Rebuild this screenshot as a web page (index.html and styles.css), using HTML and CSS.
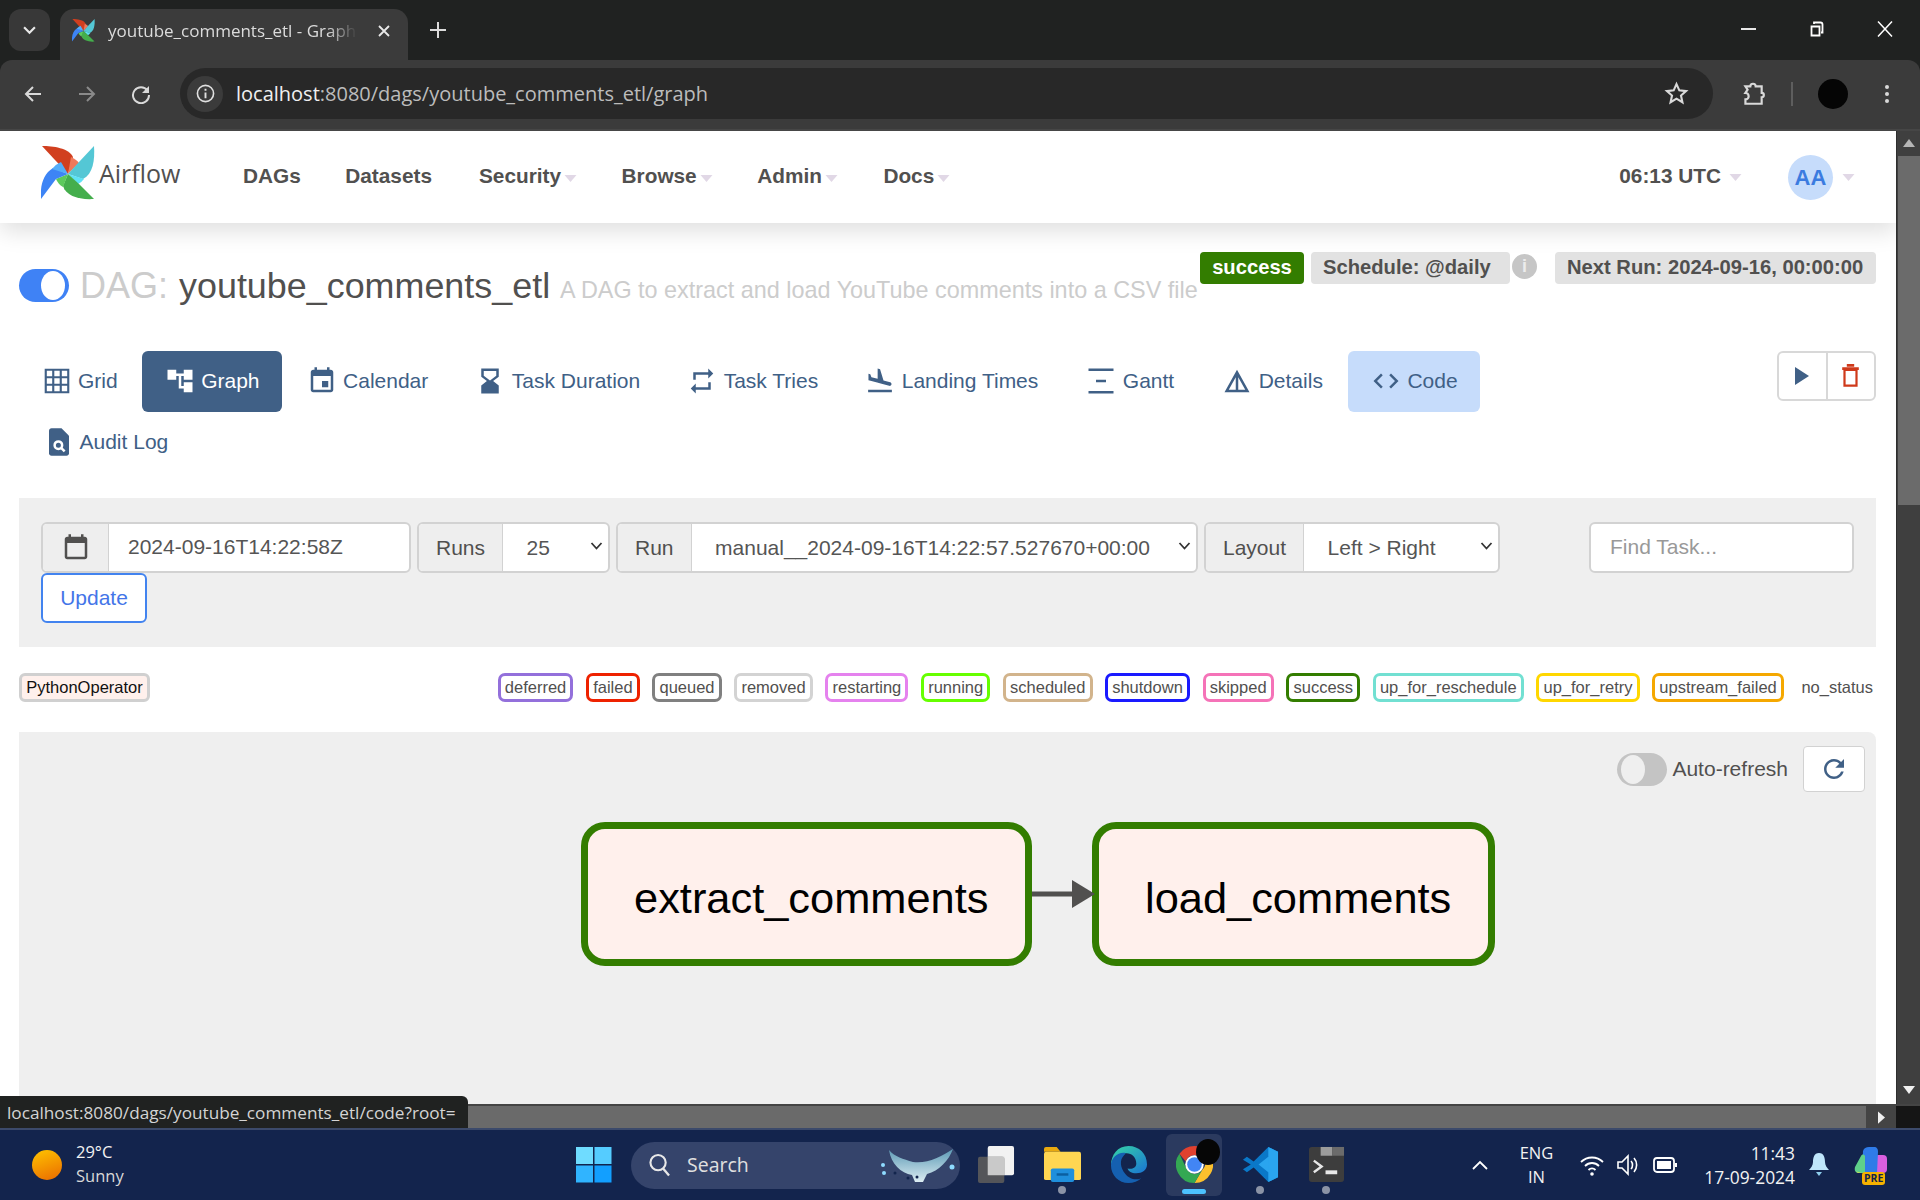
FILE: index.html
```html
<!DOCTYPE html>
<html lang="en">
<head>
<meta charset="utf-8">
<title>youtube_comments_etl - Graph - Airflow</title>
<link rel="stylesheet" href="styles.css">
</head>
<body>
<svg class="defs" width="0" height="0" aria-hidden="true">
  <symbol id="pinwheel" viewBox="0 0 54 54">
    <path fill="#d13f1f" d="M1 0C12 0 28 2 32 11L27 28Z"/>
    <path fill="#f0795b" d="M30 11Q36 14 38 17L27 28Z"/>
    <path fill="#54c7d5" d="M53 0C54 14 52 28 42 33L27 28L38 16Z"/>
    <path fill="#5fe2f5" d="M27 28L43 33Q40 37 37 38Z"/>
    <path fill="#44ae4c" d="M53 53C38 54 25 50 22 40L27 28L38 38Z"/>
    <path fill="#5cca5c" d="M27 28L22 41Q17 38 15 33Z"/>
    <path fill="#3d84f5" d="M0 53C-1 40 2 28 12 22L27 28L15 33Z"/>
    <path fill="#54adf8" d="M27 28L11 23Q15 18 20 16Z"/>
  </symbol>
  <symbol id="caret" viewBox="0 0 12 7"><path fill="#e1d8e6" d="M0 0h12L6 7z"/></symbol>
  <symbol id="chev" viewBox="0 0 12 8"><path fill="none" stroke="#333" stroke-width="1.8" d="M1 1l5 5.500L11 1"/></symbol>
</svg>

<header class="tabstrip">
  <div class="tab-search"><svg class="ico12" viewBox="0 0 12 8"><path fill="none" stroke="#e8e8e8" stroke-width="2" d="M1 1l5 5 5-5"/></svg></div>
  <div class="tab">
    <svg class="favicon"><use href="#pinwheel"/></svg>
    <span class="tab-title">youtube_comments_etl - Graph</span>
    <svg class="tab-close" viewBox="0 0 12 12"><path stroke="#e8e8e8" stroke-width="1.8" d="M1 1l10 10M11 1L1 11"/></svg>
  </div>
  <svg class="new-tab" viewBox="0 0 16 16"><path stroke="#dcdcdc" stroke-width="2" d="M8 0v16M0 8h16"/></svg>
  <div class="win-controls">
    <svg class="win-ico" viewBox="0 0 16 16"><path stroke="#fff" stroke-width="1.800" d="M0 8h15"/></svg>
    <svg class="win-ico" viewBox="0 0 16 16"><path fill="none" stroke="#fff" stroke-width="1.800" d="M2.500 5.500h8v9h-8zM5 3V1.500h6.500a2 2 0 0 1 2 2v8h-1.500"/></svg>
    <svg class="win-ico" viewBox="0 0 16 16"><path stroke="#fff" stroke-width="1.500" d="M1 0.500l14 15M15 0.500l-14 15"/></svg>
  </div>
</header>

<div class="toolbar">
  <svg class="tb-ico" viewBox="0 0 20 20"><path fill="none" stroke="#d9d9d9" stroke-width="2" d="M18 10H3M10 3l-7 7 7 7"/></svg>
  <svg class="tb-ico dim" viewBox="0 0 20 20"><path fill="none" stroke="#8a8a8a" stroke-width="2" d="M2 10h15M10 3l7 7-7 7"/></svg>
  <svg class="tb-ico" viewBox="0 0 20 20"><path fill="none" stroke="#d9d9d9" stroke-width="2" d="M16.500 6.500A8 8 0 1 0 18 11"/><path fill="#d9d9d9" d="M18 2v7h-7z"/></svg>
  <div class="omnibox">
    <div class="site-info"><svg class="info-ico" viewBox="0 0 20 20"><circle cx="10" cy="10" r="8.500" fill="none" stroke="#e0e0e0" stroke-width="1.700"/><path stroke="#e0e0e0" stroke-width="2" d="M10 9v6M10 5v2"/></svg></div>
    <span class="url"><span class="url-host">localhost</span>:8080/dags/youtube_comments_etl/graph</span>
    <svg class="star" viewBox="0 0 24 24"><path fill="none" stroke="#d9d9d9" stroke-width="2" d="M12 3l2.700 6 6.500.7-4.900 4.300 1.400 6.400L12 17l-5.700 3.400 1.400-6.400-4.900-4.300 6.500-.7z"/></svg>
  </div>
  <svg class="ext" viewBox="0 0 24 24"><path fill="none" stroke="#d9d9d9" stroke-width="2" d="M5 5h4.500a2.500 2.500 0 0 1 5 0H20v6a2 2 0 0 1 0 4v6H5v-4a3 3 0 0 0 0-6l2-3z"/></svg>
  <span class="tb-sep"></span>
  <span class="profile"></span>
  <svg class="kebab" viewBox="0 0 4 20"><circle cx="2" cy="3" r="2" fill="#d9d9d9"/><circle cx="2" cy="10" r="2" fill="#d9d9d9"/><circle cx="2" cy="17" r="2" fill="#d9d9d9"/></svg>
</div>

<div class="viewport">
  <main class="page">
    <nav class="navbar">
      <a class="brand"><svg class="logo"><use href="#pinwheel"/></svg><span class="brand-name">Airflow</span></a>
      <ul class="menu">
        <li>DAGs</li>
        <li>Datasets</li>
        <li>Security<svg class="caret"><use href="#caret"/></svg></li>
        <li>Browse<svg class="caret"><use href="#caret"/></svg></li>
        <li>Admin<svg class="caret"><use href="#caret"/></svg></li>
        <li>Docs<svg class="caret"><use href="#caret"/></svg></li>
      </ul>
      <div class="nav-right">
        <span class="clock">06:13 UTC</span><svg class="caret caret-clock"><use href="#caret"/></svg>
        <span class="avatar">AA</span><svg class="caret caret-user"><use href="#caret"/></svg>
      </div>
    </nav>

    <div class="content">
      <section class="dag-head">
        <h3 class="dag-title">
          <span class="toggle on"><span class="knob"></span></span>
          <span class="dag-label">DAG:</span>
          <span class="dag-name">youtube_comments_etl</span>
          <small class="dag-desc">A DAG to extract and load YouTube comments into a CSV file</small>
        </h3>
        <div class="badges">
          <span class="badge badge-success">success</span>
          <span class="badge badge-sched">Schedule: @daily</span>
          <span class="info-dot">i</span>
          <span class="badge badge-next">Next Run: 2024-09-16, 00:00:00</span>
        </div>
      </section>

      <section class="tabs-row">
        <ul class="tabs">
          <li class="tab-link"><svg class="t-ico" viewBox="0 0 24 24"><path fill="none" stroke="currentColor" stroke-width="1.700" d="M3 3h18v18H3zM3 9h18M3 15h18M9 3v18M15 3v18"/></svg>Grid</li>
          <li class="tab-link active"><svg class="t-ico" viewBox="0 0 24 24"><path fill="currentColor" d="M22 11V3h-7v3H9V3H2v8h7V8h2v10h4v3h7v-8h-7v3h-2V8h2v3z"/></svg>Graph</li>
          <li class="tab-link"><svg class="t-ico" viewBox="0 0 24 24"><path fill="currentColor" d="M17 12h-5v5h5v-5zM16 1v2H8V1H6v2H5c-1.110 0-1.990.9-1.990 2L3 19c0 1.100.89 2 2 2h14c1.100 0 2-.9 2-2V5c0-1.100-.9-2-2-2h-1V1h-2zm3 18H5V8h14v11z"/></svg>Calendar</li>
          <li class="tab-link"><svg class="t-ico" viewBox="0 0 24 24"><path fill="currentColor" fill-rule="evenodd" d="M5 2h14v6.500L14.500 12l4.500 3.500V22H5v-6.500L9.500 12 5 8.500zM7 4v3.700l5 3.800 5-3.800V4z"/></svg>Task Duration</li>
          <li class="tab-link"><svg class="t-ico" viewBox="0 0 24 24"><path fill="currentColor" d="M7 7h10v3l4-4-4-4v3H5v6h2V7zm10 10H7v-3l-4 4 4 4v-3h12v-6h-2v4z"/></svg>Task Tries</li>
          <li class="tab-link"><svg class="t-ico" viewBox="0 0 24 24"><path fill="currentColor" d="M2.500 19h19v2h-19zm7.180-5.730l4.350 1.160 5.310 1.420c.8.21 1.620-.26 1.840-1.060.21-.8-.26-1.620-1.060-1.840l-5.310-1.420-2.760-9.020L10.120 2v8.280L5.150 8.950l-.93-2.320-1.450-.39v5.170l1.600.43 5.310 1.430z"/></svg>Landing Times</li>
          <li class="tab-link tab-nudge"><svg class="t-ico" viewBox="0 0 24 24"><path fill="currentColor" d="M2 2h20v2H2zM8 11h8v2H8zM2 20h20v2H2z"/></svg>Gantt</li>
          <li class="tab-link tab-nudge"><svg class="t-ico" viewBox="0 0 24 24"><path fill="currentColor" d="M12 3L2 21h20L12 3zm1 5.920L18.600 19H13V8.920zm-2 0V19H5.400L11 8.920z"/></svg>Details</li>
          <li class="tab-link tab-nudge hover"><svg class="t-ico" viewBox="0 0 24 24"><path fill="currentColor" d="M9.400 16.600L4.800 12l4.600-4.600L8 6l-6 6 6 6 1.400-1.400zm5.200 0l4.600-4.600-4.600-4.600L16 6l6 6-6 6-1.400-1.400z"/></svg>Code</li>
          <li class="tab-link audit"><svg class="t-ico" viewBox="0 0 24 24"><path fill="currentColor" d="M14 1H6c-1.100 0-2 .9-2 2v18c0 1.100.9 2 2 2h12c1.100 0 2-.9 2-2V7z"/><circle cx="11.500" cy="14.500" r="3" fill="none" stroke="#fff" stroke-width="2"/><path stroke="#fff" stroke-width="2" d="M13.500 16.500l3 3"/></svg>Audit Log</li>
        </ul>
        <div class="actions">
          <span class="action"><svg class="play" viewBox="0 0 14 18"><path fill="#406086" d="M0 0l14 9-14 9z"/></svg></span>
          <span class="action"><svg class="trash" viewBox="0 0 18 26"><path fill="none" stroke="#cf3a1b" stroke-width="2.400" d="M2.500 6.500h13v17h-13z"/><path fill="#cf3a1b" d="M0 3.500h18v3H0zM5 0h8v3H5z"/></svg></span>
        </div>
      </section>

      <form class="filters">
        <div class="group group-date">
          <span class="addon addon-cal"><svg class="cal-ico" viewBox="0 0 24 24"><path fill="#51504f" d="M6 1h2v2h8V1h2v2h1c1.100 0 2 .9 2 2v14c0 1.100-.9 2-2 2H5c-1.100 0-2-.9-2-2V5c0-1.100.9-2 2-2h1zM5 8v11h14V8z"/></svg></span>
          <span class="field">2024-09-16T14:22:58Z</span>
        </div>
        <div class="group group-runs">
          <span class="addon">Runs</span>
          <span class="field select">25<svg class="chev"><use href="#chev"/></svg></span>
        </div>
        <div class="group group-run">
          <span class="addon">Run</span>
          <span class="field select">manual__2024-09-16T14:22:57.527670+00:00<svg class="chev"><use href="#chev"/></svg></span>
        </div>
        <div class="group group-layout">
          <span class="addon">Layout</span>
          <span class="field select">Left &gt; Right<svg class="chev"><use href="#chev"/></svg></span>
        </div>
        <div class="group group-find"><span class="field placeholder">Find Task...</span></div>
        <button class="update" type="button">Update</button>
      </form>

      <section class="legend">
        <span class="op-chip">PythonOperator</span>
        <div class="states">
          <span class="state s-deferred">deferred</span>
          <span class="state s-failed">failed</span>
          <span class="state s-queued">queued</span>
          <span class="state s-removed">removed</span>
          <span class="state s-restarting">restarting</span>
          <span class="state s-running">running</span>
          <span class="state s-scheduled">scheduled</span>
          <span class="state s-shutdown">shutdown</span>
          <span class="state s-skipped">skipped</span>
          <span class="state s-success">success</span>
          <span class="state s-reschedule">up_for_reschedule</span>
          <span class="state s-retry">up_for_retry</span>
          <span class="state s-upstream">upstream_failed</span>
          <span class="state s-none">no_status</span>
        </div>
      </section>

      <section class="graph">
        <div class="graph-tools">
          <span class="toggle off"><span class="knob"></span></span>
          <span class="auto-label">Auto-refresh</span>
          <span class="refresh"><svg class="refresh-ico" viewBox="0 0 24 24"><path fill="#406086" d="M17.650 6.350C16.200 4.900 14.210 4 12 4c-4.420 0-7.990 3.580-7.990 8s3.570 8 7.990 8c3.730 0 6.840-2.550 7.730-6h-2.080c-.82 2.330-3.040 4-5.650 4-3.310 0-6-2.690-6-6s2.690-6 6-6c1.660 0 3.140.69 4.220 1.780L13 11h7V4l-2.350 2.350z"/></svg></span>
        </div>
        <div class="dag-canvas">
          <div class="node node-extract">extract_comments</div>
          <svg class="edge" viewBox="0 0 63 28"><path stroke="#51504f" stroke-width="5" d="M0 14h42"/><path fill="#51504f" d="M40 0l23 14-23 14z"/></svg>
          <div class="node node-load">load_comments</div>
        </div>
      </section>
    </div>
  </main>
  <aside class="vscroll">
    <svg class="vs-arrow" viewBox="0 0 12 8"><path fill="#b5b5b5" d="M6 0l6 8H0z"/></svg>
    <span class="vs-thumb"></span>
    <svg class="vs-arrow vs-down" viewBox="0 0 12 8"><path fill="#f0f0f0" d="M6 8l6-8H0z"/></svg>
  </aside>
</div>

<div class="hscroll">
  <span class="hs-track"></span>
  <span class="hs-right"><svg class="hs-arrow" viewBox="0 0 8 14"><path fill="#f0f0f0" d="M8 7L0 14V0z"/></svg></span>
  <span class="hs-corner"></span>
</div>
<div class="status">localhost:8080/dags/youtube_comments_etl/code?root=</div>

<footer class="taskbar">
  <div class="weather">
    <span class="sun"></span>
    <div class="weather-text"><span>29°C</span><span class="sunny">Sunny</span></div>
  </div>
  <div class="centre">
    <svg class="win-logo" viewBox="0 0 36 36">
      <rect x="0" y="0" width="17" height="17" fill="#6fdcff"/><rect x="18.500" y="0" width="17" height="17" fill="#55ccff"/>
      <rect x="0" y="18.500" width="17" height="17" fill="#30b4ff"/><rect x="18.500" y="18.500" width="17" height="17" fill="#129fff"/>
    </svg>
    <div class="search">
      <svg class="search-ico" viewBox="0 0 22 24"><circle cx="9.500" cy="9.500" r="8" fill="none" stroke="#e8e8e8" stroke-width="2.200"/><path stroke="#e8e8e8" stroke-width="2.400" d="M15 16l6 7"/></svg>
      <span class="search-text">Search</span>
      <svg class="manta" viewBox="0 0 74 36">
        <defs><linearGradient id="mantag" x1="0" y1="0" x2="0" y2="1"><stop offset="0" stop-color="#5c9ab5"/><stop offset="1" stop-color="#dcecf2"/></linearGradient></defs>
        <path fill="url(#mantag)" d="M8 3c6 7 14 9 24 12 14 2 28-5 40-13-4 11-14 22-26 25l-4 8h-8l-3-7C20 26 10 17 8 3z"/>
        <circle cx="2" cy="18" r="2" fill="#8fdcff"/><circle cx="3" cy="26" r="2" fill="#8fdcff"/><circle cx="71" cy="20" r="2.500" fill="#8fdcff"/>
        <circle cx="14" cy="26" r="1.500" fill="#12254d"/><circle cx="27" cy="31" r="1.500" fill="#12254d"/><circle cx="36" cy="30" r="1.500" fill="#12254d"/>
      </svg>
    </div>
    <div class="apps">
      <span class="app">
        <svg class="app-ico" viewBox="0 0 38 38"><rect x="10" y="0" width="27" height="30" rx="2" fill="#f2f2f2"/><rect x="0" y="11" width="27" height="27" rx="2" fill="#5a5a5a" fill-opacity=".92"/><rect x="10" y="11" width="17" height="19" fill="#c9c9c9"/></svg>
      </span>
      <span class="app dotted">
        <svg class="app-ico" viewBox="0 0 38 36"><path fill="#e9a90f" d="M0 2a2 2 0 0 1 2-2h11l4 5h-17z"/><rect y="5" width="38" height="29" rx="2" fill="#ffd652"/><rect x="7" y="22" width="24" height="14" rx="2" fill="#1f8fdc"/><rect x="13" y="27" width="12" height="2.500" fill="#0b5fa0"/></svg>
      </span>
      <span class="app">
        <svg class="app-ico" viewBox="0 0 38 38"><defs><linearGradient id="edgeg" x1="0" y1="0" x2="1" y2="1"><stop offset="0" stop-color="#36d6a5"/><stop offset="1" stop-color="#1a74d4"/></linearGradient></defs><path fill="url(#edgeg)" d="M19 0C30 0 38 8 38 19c0 6-5 9-11 9-5 0-8-2-9-5 4 1 9 0 9-5C27 10 20 6 14 8 7 10 3 15 1 20 1 9 8 0 19 0z"/><path fill="#1560b0" d="M1 20c0-7 6-13 13-13 3 0 2 1 0 3-4 4-4 12 2 19 3 4 10 7 16 4-3 3-8 5-13 5C9 38 1 30 1 20z"/></svg>
      </span>
      <span class="app active">
        <svg class="app-ico" viewBox="0 0 38 38"><path fill="#e1412f" d="M19 0a19 19 0 0 1 16.500 9.500H19a9.500 9.500 0 0 0-9 6.500L3.500 8A19 19 0 0 1 19 0z"/><path fill="#fbc02d" d="M35.500 9.500A19 19 0 0 1 19 38l8-13.500a9.500 9.500 0 0 0-1-15z"/><path fill="#34a853" d="M3.500 8L11 24a9.500 9.500 0 0 0 16 .5L19 38A19 19 0 0 1 3.500 8z"/><circle cx="19" cy="19" r="9.500" fill="#fff"/><circle cx="19" cy="19" r="7.500" fill="#4285f4"/></svg>
        <span class="blot"></span>
        <span class="app-bar"></span>
      </span>
      <span class="app dotted">
        <svg class="app-ico" viewBox="0 0 38 38"><path fill="#0a78c8" d="M27 1l10 5v26l-10 5L12 22l-7 5-4-3 8-5-8-5 4-3 7 5z"/><path fill="#2aa5ef" d="M27 1l10 5v26l-10 5zM27 11L17 19l10 8z"/></svg>
      </span>
      <span class="app dotted">
        <svg class="app-ico" viewBox="0 0 36 38"><rect width="36" height="36" y="1" rx="3" fill="#3d3d3d"/><rect width="12" height="9" x="12" y="1" fill="#9c9c9c"/><rect width="12" height="9" x="24" y="1" fill="#6b6b6b"/><path fill="none" stroke="#e8e8e8" stroke-width="2.500" d="M5 15l8 6-8 6"/><rect x="17" y="25" width="12" height="4" fill="#e8e8e8"/></svg>
      </span>
    </div>
  </div>
  <div class="tray">
    <svg class="tray-chev" viewBox="0 0 16 10"><path fill="none" stroke="#fff" stroke-width="1.800" d="M1 9l7-7 7 7"/></svg>
    <div class="lang"><span>ENG</span><span>IN</span></div>
    <svg class="tray-ico" viewBox="0 0 24 24"><path fill="none" stroke="#fff" stroke-width="1.800" d="M1 9c6-6 16-6 22 0M5 13c4-4 10-4 14 0M8.500 17c2-2 5-2 7 0"/><circle cx="12" cy="21" r="1.800" fill="#fff"/></svg>
    <svg class="tray-ico" viewBox="0 0 24 24"><path fill="none" stroke="#fff" stroke-width="1.600" d="M3 9h4l6-6v18l-6-6H3zM16 8c2 2 2 6 0 8M19 5c3.500 4 3.500 10 0 14"/></svg>
    <svg class="tray-ico tray-batt" viewBox="0 0 24 24"><rect x="1" y="5" width="20" height="14" rx="3" fill="none" stroke="#fff" stroke-width="1.800"/><rect x="4" y="8" width="14" height="8" fill="#fff"/><rect x="22" y="10" width="2" height="4" fill="#fff"/></svg>
    <div class="datetime"><span>11:43</span><span>17-09-2024</span></div>
    <svg class="bell" viewBox="0 0 20 24"><path fill="#bfe6fb" d="M10 0c5 0 6 5 6 9 0 3 2 6 4 8H0c2-2 4-5 4-8 0-4 1-9 6-9z"/><path fill="#8fcfee" d="M7 19h6l-3 4z"/></svg>
    <div class="copilot">
      <svg class="copilot-ico" viewBox="0 0 34 30"><rect x="20" y="8" width="13" height="18" rx="4" fill="#d95fe0"/><path fill="#2f7be8" d="M9 4c1-3 3-4 6-4h5c3 0 4 2 4 5l-1 21H8z"/><path fill="#5fd08a" d="M7 9c1-2 3-2 4 0v17H5c-3 0-5-2-4-6z"/><path fill="#e8df4a" d="M2 24c3 2 6 2 10 2H4z"/></svg>
      <span class="pre">PRE</span>
    </div>
  </div>
</footer>
</body>
</html>
```
FILE: styles.css
```css
* { box-sizing: border-box; }
html, body { margin: 0; padding: 0; }
body {
  width: 1920px;
  height: 1200px;
  overflow: hidden;
  display: flex;
  flex-direction: column;
  position: relative;
  font-family: "Liberation Sans", Arial, sans-serif;
  color: #51504f;
  background: #202221;
}
ul { list-style: none; margin: 0; padding: 0; }
.defs { position: absolute; }

/* browser chrome */
.tabstrip {
  height: 60px;
  flex: none;
  display: flex;
  align-items: flex-start;
  padding: 9px 0 0 9px;
  background: #202221;
  font-family: "Open Sans", sans-serif;
}
.tab-search {
  width: 41px;
  height: 42px;
  border-radius: 12px;
  background: #383838;
  display: flex;
  align-items: center;
  justify-content: center;
}
.ico12 { width: 13px; height: 9px; }
.tab {
  width: 348px;
  height: 51px;
  margin-left: 10px;
  border-radius: 14px 14px 0 0;
  background: #3b3b3b;
  display: flex;
  align-items: center;
  padding: 0 17px 8px 12px;
}
.favicon { width: 23px; height: 23px; flex: none; }
.tab-title {
  margin-left: 13px;
  width: 249px;
  overflow: hidden;
  white-space: nowrap;
  font-size: 17px;
  color: #dcdcdc;
  -webkit-mask-image: linear-gradient(to right, #000 88%, transparent);
  mask-image: linear-gradient(to right, #000 88%, transparent);
}
.tab-close { width: 12px; height: 12px; margin-left: 21px; flex: none; }
.new-tab { width: 16px; height: 16px; margin: 13px 0 0 22px; flex: none; }
.win-controls {
  margin-left: auto;
  display: flex;
  gap: 52px;
  padding: 12px 27px 0 0;
}
.win-ico { width: 16px; height: 16px; }

.toolbar {
  height: 71px;
  flex: none;
  display: flex;
  align-items: center;
  background: #3b3b3b;
  border-radius: 12px 12px 0 0;
  border-bottom: 2px solid #464646;
  padding: 0 0 2px 23px;
}
.tb-ico { width: 20px; height: 20px; margin-right: 34px; flex: none; }
.omnibox {
  width: 1533px;
  height: 51px;
  margin-left: -5px;
  border-radius: 26px;
  background: #282828;
  display: flex;
  align-items: center;
  padding: 0 24px 0 7px;
  font-family: "Open Sans", sans-serif;
}
.site-info {
  width: 36px;
  height: 36px;
  border-radius: 50%;
  background: #3b3b3b;
  display: flex;
  align-items: center;
  justify-content: center;
}
.info-ico { width: 19px; height: 19px; }
.url { margin-left: 13px; font-size: 20px; color: #bcbcbc; white-space: nowrap; }
.url-host { color: #f0f0f0; }
.star { width: 25px; height: 25px; margin-left: auto; }
.ext { width: 26px; height: 26px; margin-left: 27px; flex: none; }
.tb-sep { width: 2px; height: 24px; margin-left: 25px; background: #5e5e5e; flex: none; }
.profile { width: 30px; height: 30px; border-radius: 50%; background: #050505; margin-left: 25px; flex: none; }
.kebab { width: 4px; height: 20px; margin-left: 37px; flex: none; }

.viewport { height: 973px; flex: none; display: flex; overflow: hidden; }
.page { width: 1896px; flex: none; background: #fff; overflow: hidden; }

.vscroll {
  width: 24px;
  flex: none;
  background: #3f3f3f;
  display: flex;
  flex-direction: column;
  align-items: center;
  border-left: 1px solid #2e2e2e;
}
.vs-arrow { width: 12px; height: 8px; margin-top: 8px; flex: none; }
.vs-thumb { width: 22px; height: 349px; margin-top: 9px; background: #6b6b6b; flex: none; }
.vs-down { margin-top: auto; margin-bottom: 10px; }

.hscroll { height: 24px; flex: none; display: flex; background: #6a6a6a; border-top: 2px solid #444; }
.hs-track { flex: 1; }
.hs-right { width: 30px; background: #444; display: flex; align-items: center; justify-content: center; }
.hs-arrow { width: 7px; height: 13px; }
.hs-corner { width: 24px; background: #151515; }
.status {
  position: absolute;
  left: 0;
  bottom: 72px;
  width: 468px;
  height: 32px;
  padding: 5px 0 0 7px;
  background: #202221;
  border-radius: 0 6px 0 0;
  color: #d4d4d4;
  font-family: "Open Sans", sans-serif;
  font-size: 17.200px;
  white-space: nowrap;
}

/* airflow nav */
.navbar {
  height: 92px;
  display: flex;
  align-items: flex-start;
  background: #fff;
  box-shadow: 0 8px 22px rgba(0, 0, 0, .13);
  position: relative;
}
.brand { display: flex; padding: 15px 0 0 41px; width: 243px; flex: none; }
.logo { width: 54px; height: 54px; flex: none; }
.brand-name {
  margin: 11px 0 0 4px;
  font-family: "Open Sans", sans-serif;
  font-size: 25px;
  line-height: 32px;
  color: #51504f;
}
.menu { display: flex; padding-top: 32px; font-weight: 700; font-size: 20.800px; line-height: 26px; }
.menu li { margin-right: 44.500px; display: flex; align-items: center; }
.menu li:nth-child(2) { margin-right: 47px; }
.menu li:nth-child(5) { margin-right: 45.500px; }
.caret { width: 13px; height: 7px; flex: none; margin: 4px 0 0 3px; }
.nav-right { margin-left: auto; display: flex; align-items: flex-start; padding: 32px 41px 0 0; font-weight: 700; font-size: 20.800px; line-height: 26px; }
.clock { white-space: nowrap; }
.caret-clock { margin: 11px 0 0 8px; }
.avatar {
  width: 45px;
  height: 45px;
  margin: -8px 0 0 46px;
  border-radius: 50%;
  background: #c6dcfb;
  color: #3b7be0;
  display: flex;
  align-items: center;
  justify-content: center;
  font-size: 22px;
}
.caret-user { margin: 11px 0 0 9px; }

.content { padding: 29px 20px 0 19px; }

.dag-head { height: 99px; display: flex; justify-content: space-between; align-items: flex-start; }
.dag-title { margin: 14px 0 0; display: flex; align-items: center; font-weight: 400; white-space: nowrap; height: 40px; }
.toggle { display: block; border-radius: 17px; flex: none; width: 50px; height: 33px; position: relative; }
.toggle.on { background: #3f82f5; top: -1px; }
.toggle.off { background: #c4c4c4; }
.knob { position: absolute; top: 2px; width: 24px; height: 29px; border-radius: 50%; background: #fff; }
.on .knob { right: 4px; }
.off .knob { left: 4px; background: #efefef; }
.dag-label { margin-left: 11px; font-size: 36px; color: #ccc; }
.dag-name { margin-left: 11px; font-size: 35.900px; color: #51504f; }
.dag-desc { margin-left: 10px; font-size: 23.400px; color: #ccc; position: relative; top: 4px; }
.badges { display: flex; align-items: flex-start; }
.badge { height: 32px; line-height: 31px; border-radius: 4px; font-weight: 700; font-size: 20.200px; white-space: nowrap; }
.badge-success { width: 104px; text-align: center; background: #337d00; color: #fff; }
.badge-sched { width: 199px; margin-left: 7px; padding-left: 12px; background: #e2e2e2; }
.info-dot {
  width: 25px;
  height: 25px;
  margin: 2px 0 0 2px;
  border-radius: 50%;
  background: #c6c6c6;
  color: #ececec;
  text-align: center;
  font-weight: 700;
  font-size: 18px;
  line-height: 25px;
}
.badge-next { width: 321px; margin-left: 18px; padding-left: 12px; background: #e2e2e2; }

.tabs-row { display: flex; justify-content: space-between; align-items: flex-start; height: 147px; }
.tabs { display: flex; flex-wrap: wrap; width: 1472px; column-gap: 2px; font-size: 21px; }
.tab-link {
  height: 61px;
  padding: 0 22.500px 2px;
  display: flex;
  align-items: center;
  border-radius: 6px;
  color: #406086;
  white-space: nowrap;
}
.tab-nudge { margin-left: 1px; }
.tab-link.active { background: #406086; color: #fff; }
.tab-link.hover { background: #c6dcfb; }
.tab-link.audit { height: 60px; padding: 0 22.500px 0 25px; }
.t-ico { width: 30px; height: 30px; margin-right: 6.500px; flex: none; }
.audit .t-ico { margin-right: 5.500px; }
.actions { display: flex; width: 99px; height: 50px; border: 2px solid #d8d8d8; border-radius: 6px; }
.action { flex: 1; display: flex; align-items: center; justify-content: center; }
.action + .action { border-left: 2px solid #d8d8d8; }
.play { width: 14px; height: 18px; }
.trash { width: 17px; height: 24px; }

.filters {
  margin: 0;
  padding: 24px 22px;
  background: #efefef;
  display: flex;
  flex-wrap: wrap;
  column-gap: 6px;
  height: 149px;
  font-size: 21px;
}
.group { height: 51px; display: flex; background: #fff; border: 2px solid #d2d2d2; border-radius: 6px; flex: none; }
.group-date { width: 370px; }
.group-runs { width: 193px; }
.group-run { width: 582px; }
.group-layout { width: 296px; }
.group-find { width: 265px; margin-left: auto; }
.addon {
  display: flex;
  align-items: center;
  padding: 0 17px;
  background: #eee;
  border-right: 1px solid #d2d2d2;
  border-radius: 4px 0 0 4px;
  flex: none;
}
.addon-cal { width: 66px; justify-content: center; padding: 0; }
.cal-ico { width: 30px; height: 30px; }
.field { flex: 1; display: flex; align-items: center; padding: 0 18px 2px 19px; color: #555; white-space: nowrap; position: relative; min-width: 0; }
.select { padding-left: 23.500px; padding-bottom: 0; }
.placeholder { color: #999; }
.chev { position: absolute; right: 5px; top: 18px; width: 13px; height: 8px; }
.update {
  width: 106px;
  height: 50px;
  border: 2px solid #4283ef;
  border-radius: 6px;
  background: #fff;
  color: #4475e8;
  font: inherit;
  padding: 0;
  flex: none;
}

.legend { margin-top: 26px; height: 29px; display: flex; justify-content: space-between; align-items: center; font-size: 16.500px; }
.op-chip { height: 29px; width: 131px; text-align: center; line-height: 23px; background: #fff0ec; border: 3px solid #d0d0d0; border-radius: 6px; color: #111; white-space: nowrap; }
.states { display: flex; gap: 12.500px; }
.state { height: 29px; line-height: 23px; padding: 0 4.200px; border: 3px solid; border-radius: 7px; white-space: nowrap; background: #fff; }
.s-deferred { border-color: #9370db; }
.s-failed { border-color: #ee2200; }
.s-queued { border-color: #808080; }
.s-removed { border-color: #d3d3d3; }
.s-restarting { border-color: #e582ee; }
.s-running { border-color: #66ff00; }
.s-scheduled { border-color: #d2b48c; }
.s-shutdown { border-color: #1a1aff; }
.s-skipped { border-color: #f573b8; }
.s-success { border-color: #337d00; }
.s-reschedule { border-color: #72e0d2; }
.s-retry { border-color: #ffd700; }
.s-upstream { border-color: #f5a800; }
.s-none { border-color: transparent; padding: 0; margin-left: 2px; }

.graph { margin-top: 30px; height: 500px; background: #efefef; border-radius: 0 8px 0 0; padding-top: 14px; }
.graph-tools { display: flex; align-items: center; justify-content: flex-end; padding-right: 11px; font-size: 21px; height: 46px; }
.auto-label { margin-left: 5px; }
.refresh {
  width: 62px;
  height: 46px;
  margin-left: 15px;
  background: #fff;
  border: 1px solid #d2d2d2;
  border-radius: 4px;
  display: flex;
  align-items: center;
  justify-content: center;
}
.refresh-ico { width: 30px; height: 30px; }
.dag-canvas { display: flex; align-items: center; margin: 30px 0 0 562px; }
.node {
  height: 144px;
  border: 7px solid #337d00;
  border-radius: 24px;
  background: #fff0ec;
  color: #000;
  font-size: 43.400px;
  display: flex;
  align-items: center;
  white-space: nowrap;
  padding-top: 8px;
  flex: none;
}
.node-extract { width: 451px; padding-left: 46px; }
.node-load { width: 403px; padding-left: 46px; }
.edge { width: 63px; height: 28px; flex: none; margin-right: -3px; position: relative; z-index: 1; }

/* taskbar */
.taskbar {
  height: 72px;
  flex: none;
  background: #13244d;
  border-top: 2px solid #3c4a6b;
  display: flex;
  position: relative;
  font-family: "Open Sans", sans-serif;
  color: #f2f2f2;
}
.weather { display: flex; align-items: center; padding-left: 32px; width: 576px; flex: none; }
.sun { width: 30px; height: 30px; border-radius: 50%; background: linear-gradient(160deg, #ffc400, #ea6a00); }
.weather-text { display: flex; flex-direction: column; margin: -2px 0 0 14px; font-size: 16.500px; line-height: 24px; }
.sunny { color: #d8d8d8; }
.centre { display: flex; align-items: center; flex: none; }
.win-logo { width: 36px; height: 40px; flex: none; }
.search {
  width: 329px;
  height: 47px;
  margin-left: 19px;
  border-radius: 24px;
  background: #35446b;
  display: flex;
  align-items: center;
  padding-left: 18px;
  flex: none;
}
.search-ico { width: 21px; height: 24px; flex: none; }
.search-text { margin: -2px 0 0 17px; font-size: 19.500px; color: #e0e0e0; }
.manta { width: 74px; height: 36px; margin-left: auto; margin-right: 5px; flex: none; }
.apps { display: flex; align-items: center; margin-left: 3px; height: 70px; }
.app { width: 66px; height: 70px; display: flex; align-items: flex-start; justify-content: center; padding-top: 16px; position: relative; flex: none; }
.app-ico { width: 37px; height: 37px; }
.app.dotted::after {
  content: "";
  position: absolute;
  left: calc(50% - 4px);
  bottom: 6px;
  width: 8px;
  height: 8px;
  border-radius: 50%;
  background: #8b93a6;
}
.app.active::before {
  content: "";
  position: absolute;
  left: 5px;
  right: 5px;
  top: 4px;
  bottom: 4px;
  border-radius: 6px;
  background: rgba(255, 255, 255, .1);
}
.app.active .app-ico { position: relative; }
.blot { position: absolute; left: 35px; top: 9px; width: 24px; height: 26px; border-radius: 50%; background: #060606; }
.app-bar { position: absolute; left: 21px; bottom: 6px; width: 24px; height: 5px; border-radius: 3px; background: #4cc2ff; }
.tray { margin-left: auto; display: flex; align-items: center; padding-right: 30px; }
.tray-chev { width: 16px; height: 10px; flex: none; }
.lang { display: flex; flex-direction: column; align-items: center; margin-left: 32px; font-size: 16.500px; line-height: 24px; }
.tray-ico { width: 24px; height: 24px; margin-left: 11px; flex: none; }
.lang + .tray-ico { margin-left: 27px; }
.tray-ico.tray-batt { margin-left: 14px; }
.datetime { display: flex; flex-direction: column; align-items: flex-end; margin: -1px 0 0 27px; font-size: 17.400px; line-height: 24px; }
.bell { width: 20px; height: 24px; margin-left: 14px; flex: none; }
.copilot { position: relative; width: 36px; height: 36px; margin-left: 25px; flex: none; }
.copilot-ico { width: 34px; height: 30px; }
.pre {
  position: absolute;
  left: 8px;
  bottom: -2px;
  padding: 0 2px;
  border-radius: 3px;
  background: #f6b100;
  color: #13244d;
  font-size: 10.500px;
  font-weight: 700;
  line-height: 13px;
}
```
